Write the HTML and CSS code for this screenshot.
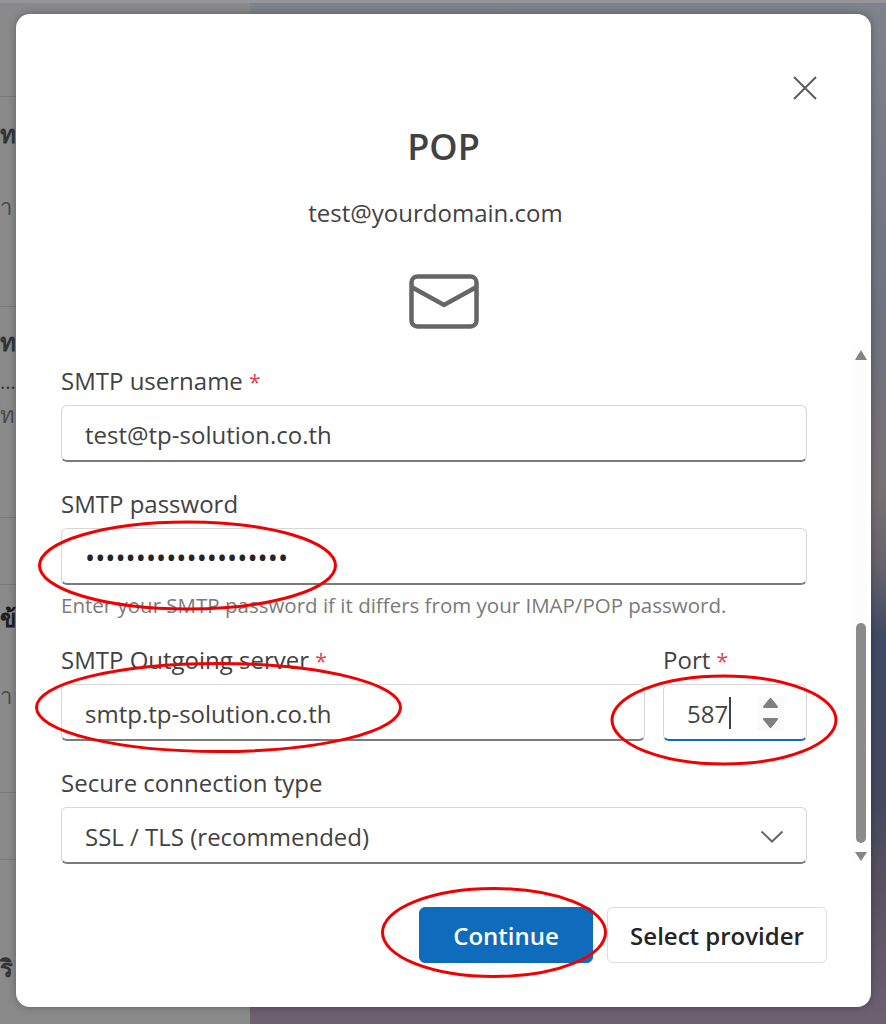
FILE: index.html
```html
<!DOCTYPE html>
<html lang="en">
<head>
    <meta charset="UTF-8">
    <meta name="viewport" content="width=device-width, initial-scale=1.0">
    <title>POP | Add account</title>
    <link rel="stylesheet" href="styles.css">
</head>
<body>
    <div class="backdrop">
        <div class="side-list">
            <div class="side-row side-row-head"></div>
            <div class="side-row side-row-a">
                <div class="side-title">ท</div>
                <div class="side-sub">า</div>
            </div>
            <div class="side-row side-row-b">
                <div class="side-title">ท</div>
                <div class="side-dots">...</div>
                <div class="side-sub">ัท</div>
            </div>
            <div class="side-row side-row-c"></div>
            <div class="side-row side-row-d">
                <div class="side-title side-strong">ข้</div>
                <div class="side-sub side-sub-low">า</div>
            </div>
            <div class="side-row side-row-e"></div>
            <div class="side-row side-row-f">
                <div class="side-title">ริ</div>
            </div>
        </div>
        <div class="wallpaper"></div>
    </div>

    <div class="modal">
        <button type="button" class="close-btn" aria-label="Close">
            <svg width="24" height="24" viewBox="0 0 24 24" fill="none" stroke="#5c5c5c" stroke-width="2">
                <path d="M1 1 L23 23 M23 1 L1 23"/>
            </svg>
        </button>

        <h2 class="title">POP</h2>
        <p class="email">test@yourdomain.com</p>
        <svg class="mail-icon" width="70" height="55" viewBox="0 0 70 55" fill="none" stroke="#666" stroke-width="4.5">
            <rect x="2.5" y="2.5" width="65" height="50" rx="6"/>
            <path d="M2.5 13 L35 31 L67.5 13"/>
        </svg>

        <form class="form">
            <div class="form-group">
                <label for="smtpUser">SMTP username <span class="req">*</span></label>
                <input type="text" id="smtpUser" value="test@tp-solution.co.th">
            </div>
            <div class="form-group">
                <label for="smtpPass">SMTP password</label>
                <input type="password" id="smtpPass" value="aaaaaaaaaaaaaaaaaaaa">
                <div class="hint">Enter your SMTP password if it differs from your IMAP/POP password.</div>
            </div>
            <div class="form-row">
                <div class="form-group">
                    <label for="smtpServer">SMTP Outgoing server <span class="req">*</span></label>
                    <input type="text" id="smtpServer" value="smtp.tp-solution.co.th">
                </div>
                <div class="form-group">
                    <label>Port <span class="req">*</span></label>
                    <div class="fake-input port-input">
                        <span>587</span><span class="caret"></span>
                        <span class="spin">
                            <svg width="17" height="32" viewBox="0 0 17 32" fill="#808080" stroke="#808080" stroke-width="2" stroke-linejoin="round">
                                <path d="M8.5 2 L15 10 L2 10 Z"/>
                                <path d="M2 22 L15 22 L8.5 30 Z"/>
                            </svg>
                        </span>
                    </div>
                </div>
            </div>
            <div class="form-group">
                <label>Secure connection type</label>
                <div class="fake-input select-input">
                    <span>SSL / TLS (recommended)</span>
                    <svg width="24" height="13" viewBox="0 0 24 13" fill="none" stroke="#666" stroke-width="2">
                        <path d="M1.5 1.5 L12 11.5 L22.5 1.5"/>
                    </svg>
                </div>
            </div>
        </form>

        <div class="actions">
            <button type="button" class="btn btn-primary">Continue</button>
            <button type="button" class="btn btn-secondary">Select provider</button>
        </div>

        <div class="scrollbar">
            <svg class="scroll-arrow" width="12" height="10" viewBox="0 0 12 10" fill="#858585"><path d="M6 0 L12 10 L0 10 Z"/></svg>
            <div class="scroll-track"><div class="scroll-thumb"></div></div>
            <svg class="scroll-arrow" width="12" height="9" viewBox="0 0 12 9" fill="#858585"><path d="M0 0 L12 0 L6 9 Z"/></svg>
        </div>
    </div>

    <!-- red marks drawn over the screenshot -->
    <svg class="marks" width="886" height="1024" viewBox="0 0 886 1024" fill="none" stroke="#f00000" stroke-width="3">
        <ellipse cx="187.5" cy="565.5" rx="148" ry="43.5"/>
        <ellipse cx="218.5" cy="707.5" rx="182" ry="44"/>
        <ellipse cx="724" cy="720" rx="112" ry="44"/>
        <ellipse cx="494" cy="932.5" rx="111.5" ry="44"/>
    </svg>
</body>
</html>
```

FILE: styles.css
```css
* {
    box-sizing: border-box;
}
html, body {
    margin: 0;
    height: 1024px;
    overflow: hidden;
}
body {
    position: relative;
    font-family: "Open Sans", "Noto Sans", "Noto Sans CJK SC", "DejaVu Sans", sans-serif;
    color: #424242;
    background-color: #7f828c;
}

/* page behind the dialog */
.backdrop {
    display: flex;
    height: 1024px;
    border-top: 3px solid #96969a;
}
.side-list {
    width: 250px;
    padding-top: 11px;
    background-color: #8a8a8a;
    overflow: hidden;
    white-space: nowrap;
}
.side-row {
    border-bottom: 1px solid #7a7a7a;
    color: #33343a;
    line-height: 30px;
}
.side-row-head { height: 83px; }
.side-row-a { height: 210px; padding-top: 22px; }
.side-row-b { height: 211px; padding-top: 20px; }
.side-row-c { height: 67px; }
.side-row-d { height: 208px; padding-top: 18px; }
.side-row-e { height: 67px; }
.side-row-f { height: 120px; padding-top: 93px; border-bottom: none; }
.side-title {
    font-size: 24px;
    font-weight: 600;
}
.side-strong {
    color: #1d1d20;
    font-weight: 700;
}
.side-sub {
    margin-top: 42px;
    font-size: 22px;
    color: #4a4a4e;
}
.side-sub-low {
    margin-top: 47px;
}
.side-dots {
    font-size: 20px;
    line-height: 22px;
    margin-top: 14px;
}
.side-row-b .side-sub {
    margin-top: 6px;
}
.wallpaper {
    flex: 1;
    background: linear-gradient(180deg, #80838c 0, #6f7280 30%, #777072 48%, #67646c 55%, #3f4a66 62%, #45495f 78%, #5a5262 87%, #6d6172 100%);
}

/* dialog */
.modal {
    position: absolute;
    left: 16px;
    top: 14px;
    width: 855px;
    height: 993px;
    padding-top: 62px;
    display: flex;
    flex-direction: column;
    align-items: center;
    background-color: #fff;
    border-radius: 14px;
    box-shadow: 0 0 8px rgba(0, 0, 0, 0.3);
}
.close-btn {
    align-self: flex-end;
    width: 24px;
    height: 24px;
    margin-right: 54px;
    padding: 0;
    border: none;
    background: none;
    line-height: 0;
}
.title {
    margin: 25px 0 0;
    font-size: 36px;
    font-weight: 600;
    line-height: 44px;
    color: #424242;
}
.email {
    margin: 28px 16px 0 0;
    font-size: 24px;
    line-height: 32px;
}
.mail-icon {
    margin-top: 45px;
    flex-shrink: 0;
}
.form {
    width: 100%;
    margin-top: 37px;
    padding: 0 64px 0 45px;
}
.form-group {
    margin-bottom: 27px;
}
.form-group label {
    display: block;
    margin-bottom: 9px;
    font-size: 24px;
    line-height: 30px;
}
.req {
    font-size: 21px;
    line-height: 1;
    color: #d9474d;
}
.form-group input,
.fake-input {
    display: block;
    width: 100%;
    height: 57px;
    padding: 2px 23px 0;
    font-family: inherit;
    font-size: 24px;
    color: #424242;
    background-color: #fff;
    border: 1.5px solid #d6d6d6;
    border-bottom: 2px solid #7a7a7a;
    border-radius: 6px;
    outline: none;
}
.form-group input[type="password"] {
    color: #242424;
    font-size: 27px;
}
.hint {
    margin-top: 7px;
    font-size: 20.5px;
    line-height: 26px;
    color: #7a7a7a;
}
.form-row {
    display: grid;
    grid-template-columns: 584px 144px;
    gap: 18px;
}
.fake-input {
    display: flex;
    align-items: center;
}
.port-input {
    border-bottom-color: #0f6cbd;
}
.caret {
    width: 2px;
    height: 32px;
    margin-left: 1px;
    background-color: #424242;
}
.spin {
    display: flex;
    align-items: center;
    justify-content: center;
    width: 27px;
    height: 35px;
    margin-left: auto;
    margin-right: -1px;
    background-color: #fafafa;
}
.select-input {
    justify-content: space-between;
    padding-right: 22px;
}
.actions {
    align-self: flex-end;
    display: flex;
    gap: 14px;
    margin-top: 16px;
    margin-right: 44px;
}
.btn {
    height: 56px;
    font-family: inherit;
    font-size: 24px;
    font-weight: 600;
    color: #242424;
    background-color: #fff;
    border: 1.5px solid #dcdcdc;
    border-radius: 6px;
}
.btn-primary {
    width: 174px;
    color: #fff;
    background-color: #0f6cbd;
    border-color: #0f6cbd;
}
.btn-secondary {
    width: 220px;
}

/* scrollbar sits over the right edge of the dialog */
.scrollbar {
    position: absolute;
    right: 4px;
    top: 333px;
    width: 13px;
    height: 514px;
    padding-top: 3px;
    display: flex;
    flex-direction: column;
    align-items: center;
    background-color: #fcfcfc;
}
.scroll-arrow {
    flex-shrink: 0;
}
.scroll-track {
    flex: 1;
    width: 100%;
    padding-top: 263px;
    padding-bottom: 9px;
    display: flex;
    justify-content: center;
}
.scroll-thumb {
    width: 10px;
    background-color: #8b8b8b;
    border-radius: 5px;
}
.marks {
    position: absolute;
    left: 0;
    top: 0;
    pointer-events: none;
}
```
